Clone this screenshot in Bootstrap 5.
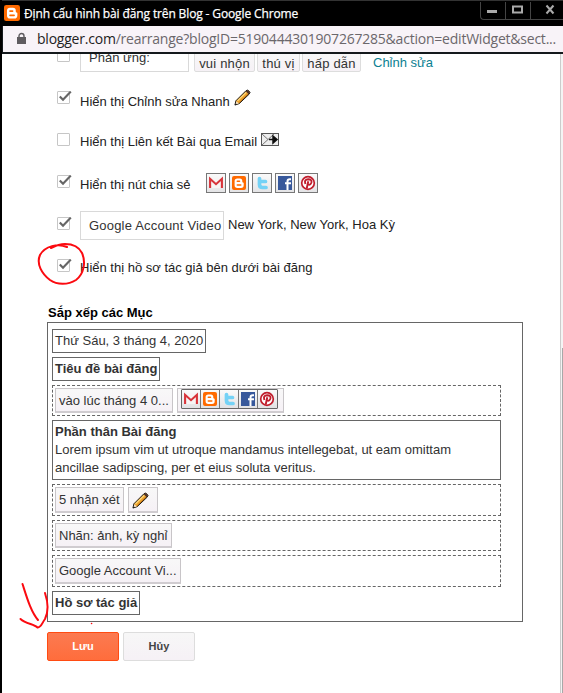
<!DOCTYPE html>
<html lang="vi">
<head>
<meta charset="utf-8">
<title>Định cấu hình bài đăng trên Blog</title>
<link rel="stylesheet" href="https://cdn.jsdelivr.net/npm/bootstrap@5.3.0/dist/css/bootstrap.min.css">
<style>
body{font:13px/18px "Liberation Sans",Arial,sans-serif;color:#222;width:563px;height:693px;overflow:hidden;background:#fff}
.win{width:563px;height:693px;border-left:2px solid #000}
.titlebar{height:26px;background:#000;color:#fff;border-top:1px solid #333;font:12px/26px "Open Sans","Noto Sans",sans-serif;padding-left:2px}
.titlebar .cap{margin-left:4px;white-space:nowrap;letter-spacing:-.13px;-webkit-text-stroke:.25px #fff}
.logo{margin-top:4px}
.controls{width:83px;height:18px;border:1px solid #444;border-right:0;border-top:0;border-radius:0 0 0 4px;margin-top:1px}
.controls span{width:25px;border-right:1px solid #444}
.controls span:last-child{flex:1;border:0}
.addr{height:28px;background:#f8f3f8;border-bottom:2px solid #14191c;border-left:1px solid #14191c;font:14px/26px "Open Sans","Noto Sans",sans-serif;color:#6b676b;padding-left:14px;white-space:nowrap}
.addr svg{flex:none;margin-top:6px}
.addr b{font-weight:400;color:#222}
.addr .url{margin-left:11px;letter-spacing:-.22px}
.page{height:639px;padding-left:45px;overflow:hidden}
.track{width:3px;height:639px;border-left:1px solid #ccc;background:#f4f4f4;padding:294px 0 0 1px}
.track div{height:345px;background:#a8a8a8}
.opt{height:42px;padding-left:10px}
.opt.first{height:37px}
.box{width:13px;height:13px;border:1px solid #c6c6c6;border-radius:1px;margin-right:10px;flex:none;background:#fff}
.box svg{display:block;overflow:visible;margin-top:-1px}
.lbl{line-height:20px;white-space:nowrap;margin-top:1px}
.up1{margin-top:0}.up2{margin-top:-1px}.up3{margin-top:-2px}
.field{border:1px solid #d9d9d9;padding-left:8px;white-space:nowrap;color:#333;flex:none}
.field.wide{width:144px;height:29px;margin-top:-6px;line-height:28px;letter-spacing:.2px}
.field.cut{width:109px;height:24px;margin-top:-6px;line-height:18px}
.chip{border:1px solid #ddd;background:linear-gradient(#f8f8f8,#f6f1f6);white-space:nowrap;color:#333}
.reac{height:22px;margin:-4px 0 0 2px;line-height:25px;border-radius:2px;text-align:center;flex:none;letter-spacing:.2px}
.more{color:#0b7f92;margin:-1px 0 0 12px}
.share{margin:-2px 0 0 15px;gap:3px}
.share>span{width:20px;height:20px;border:1px solid #777;background:linear-gradient(#fafafa,#e4e4e6);padding:1px}
.share svg,.strip svg{display:block;width:16px;height:16px}
.heading{color:#000;font-weight:700;line-height:22px;padding-left:1px;height:20px;margin-top:1px}
.board{width:476px;height:300px;border:1px solid #666;padding:6px 21px 0 4px;gap:4px;color:#333}
.solid{border:1px solid #666;padding:0 2px;height:24px;line-height:22px;white-space:nowrap}
.solid.tall{height:60px;line-height:18px;padding-top:2px}
.dash{border:1px dashed #666;padding:2px;gap:4px}
.dash .chip{border:1px solid #c8c5c8;border-bottom-width:2px;border-bottom-color:#d0ccd0;padding:0 3px;line-height:23px}
.strip{border:1px solid #666;height:20px;border-radius:1px;background:linear-gradient(#fafafa,#e2e2e4)}
.strip span{width:19px;padding:1px;border-right:1px solid #777}
.strip span:last-child{border:0}
.act{width:72px;height:29px;border-radius:2px;font:bold 11px/27px "Liberation Sans",Arial,sans-serif;padding:0}
.act.save,.act.save:hover{color:#fff;background:linear-gradient(#fb7a51,#ff6d3c);border:1px solid #ff4b12}
.act.cancel,.act.cancel:hover{color:#444;background:linear-gradient(#f7f7f7,#f6f1f6);border:1px solid #ddd}
.ink{position:absolute;left:0;top:0;pointer-events:none}
</style>
<script src="https://cdn.jsdelivr.net/npm/bootstrap@5.3.0/dist/js/bootstrap.bundle.min.js"></script>
</head>
<body>
<svg width="0" height="0" class="position-absolute">
<defs>
<symbol id="check" viewBox="0 0 15 14"><path d="M1.800 5.500 5 8.700 12.800.6" fill="none" stroke="#666" stroke-width="2.200"/></symbol>
<symbol id="gmail" viewBox="0 0 16 16"><path d="M1 3h14v10H1z" fill="#f7f4f4"/><path d="M2.100 13V3.800L8 9.200 13.900 3.800V13" fill="none" stroke="#d8343a" stroke-width="2.100"/></symbol>
<symbol id="blogger" viewBox="0 0 16 16"><rect x="1" y="1" width="14" height="14" rx="2" fill="#ff6a00"/><path d="M6.500 3.500h2.300A2.500 2.500 0 0 1 11.300 6v.7q0 .8.7.8.7 0 .7.8v1.900a2.700 2.700 0 0 1-2.700 2.700H6.300a2.700 2.700 0 0 1-2.700-2.700V6.300a2.800 2.800 0 0 1 2.900-2.800z" fill="#fff"/><path d="M6.300 6.300H8.500M6.300 10h3.500" stroke="#ff6a00" stroke-width="1.500" stroke-linecap="round"/></symbol>
<symbol id="twitter" viewBox="0 0 16 16"><path d="M5.500 3.500V9.500q0 3 3 3h3.500M6 6.500h5.500" fill="none" stroke="#74d2f6" stroke-width="3.700" stroke-linecap="round"/></symbol>
<symbol id="facebook" viewBox="0 0 16 16"><rect x="1" y="1" width="14" height="14" fill="#37589b"/><path d="M10.500 15V6.500q0-2.300 2.300-2.300H14M8 8.300h6" fill="none" stroke="#fff" stroke-width="2"/></symbol>
<symbol id="pin" viewBox="0 0 16 16"><circle cx="8" cy="8" r="6.300" fill="#fff" stroke="#c01d2c" stroke-width="1.700"/><path d="M5.400 9Q3.800 4.500 8.200 4.200q4 .1 3.200 3.300-1 3-3.300 1.900M8.300 6.200 6.700 13.500" fill="none" stroke="#c01d2c" stroke-width="1.900"/></symbol>
<symbol id="pencil" viewBox="0 0 18 18"><path d="M1 17 2 12.500 12.500 2 14.500 1 17 3.500 16 5.500 5.500 15.500z" fill="#eda32c" stroke="#111" stroke-width="1"/><path d="M3.700 12.500 13 3.500" stroke="#ffdc83" stroke-width="1.200"/><path d="M5.500 14.500 15 5.200" stroke="#b96a12"/><path d="M1.500 16.500 2.500 12.900 5.200 15.300z" fill="#f3dfc2"/><path d="M1 17l.6-2 1.500 1.400z" fill="#111"/><path d="M12.500 2.500 14.500 1.300 16.700 3.500 15.500 5.500z" fill="#4b302c"/></symbol>
</defs>
</svg>
<div class="win">
  <header class="titlebar d-flex align-items-start">
    <svg class="logo" width="16" height="16" viewBox="1 1 14 14"><use href="#blogger" width="16" height="16"/></svg>
    <span class="cap">Định cấu hình bài đăng trên Blog - Google Chrome</span>
    <div class="controls d-flex ms-auto">
      <span><svg class="d-block" width="24" height="17"><path d="M6 9.500h10" stroke="#aaa" stroke-width="3"/></svg></span>
      <span><svg class="d-block" width="24" height="17"><rect x="7" y="4.500" width="9" height="6" fill="none" stroke="#aaa" stroke-width="2"/></svg></span>
      <span><svg class="d-block" width="30" height="17"><path d="M15.500 3.500l7 8M22.500 3.500l-7 8" stroke="#aaa" stroke-width="2"/></svg></span>
    </div>
  </header>
  <div class="addr d-flex">
    <svg width="9" height="13" viewBox="0 0 9 13"><path d="M0 5h9v7H0z" fill="#5f5c60"/><path d="M2 6V4a2.500 2.500 0 0 1 5 0V6" fill="none" stroke="#5f5c60" stroke-width="1.400"/></svg>
    <span class="url"><b>blogger.com</b>/rearrange?blogID=5190444301907267285&amp;action=editWidget&amp;sect...</span>
  </div>
  <div class="d-flex">
    <main class="page flex-grow-1">
      <div class="opt first d-flex">
        <span class="box" style="margin-top:-5px"></span>
        <span class="field cut">Phản ứng:</span>
        <span class="chip reac" style="width:61px;margin-left:5px">vui nhộn</span>
        <span class="chip reac" style="width:43px">thú vị</span>
        <span class="chip reac" style="width:59px">hấp dẫn</span>
        <span class="lbl more">Chỉnh sửa</span>
      </div>
      <div class="opt d-flex"><span class="box"><svg width="15" height="14"><use href="#check"/></svg></span><span class="lbl">Hiển thị Chỉnh sửa Nhanh</span><svg width="17" height="17" style="margin:-2px 0 0 4px"><use href="#pencil"/></svg></div>
      <div class="opt d-flex"><span class="box"></span><span class="lbl up2">Hiển thị Liên kết Bài qua Email</span><svg width="19" height="13" style="margin:0 0 0 4px"><rect x=".5" y=".5" width="17" height="12" fill="#eee" stroke="#555"/><path d="M1 1l6 5.500L1 12M7 6.500 13 1" fill="none" stroke="#777"/><path d="M8 6.500h6M12 3l4 3.500L12 10z" stroke="#111" stroke-width="1.500"/></svg></div>
      <div class="opt d-flex"><span class="box"><svg width="15" height="14"><use href="#check"/></svg></span><span class="lbl up1">Hiển thị nút chia sẻ</span>
        <div class="share d-flex"><span><svg><use href="#gmail"/></svg></span><span><svg><use href="#blogger"/></svg></span><span><svg><use href="#twitter"/></svg></span><span><svg><use href="#facebook"/></svg></span><span><svg><use href="#pin"/></svg></span></div>
      </div>
      <div class="opt d-flex"><span class="box"><svg width="15" height="14"><use href="#check"/></svg></span><span class="field wide">Google Account Video</span><span class="lbl up3 ms-1">New York, New York, Hoa Kỳ</span></div>
      <div class="opt d-flex"><span class="box"><svg width="15" height="14"><use href="#check"/></svg></span><span class="lbl up2">Hiển thị hồ sơ tác giả bên dưới bài đăng</span></div>
      <div class="heading">Sắp xếp các Mục</div>
      <section class="board d-flex flex-column align-items-start">
        <div class="solid" style="width:154px">Thứ Sáu, 3 tháng 4, 2020</div>
        <div class="solid fw-bold" style="width:108px">Tiêu đề bài đăng</div>
        <div class="dash d-flex w-100" style="height:31px"><span class="chip" style="width:118px">vào lúc tháng 4 0...</span>
          <span class="chip" style="width:107px"><span class="strip d-flex" style="width:97px"><span><svg><use href="#gmail"/></svg></span><span><svg><use href="#blogger"/></svg></span><span><svg><use href="#twitter"/></svg></span><span><svg><use href="#facebook"/></svg></span><span><svg><use href="#pin"/></svg></span></span></span></div>
        <div class="solid tall w-100"><b>Phần thân Bài đăng</b><br>Lorem ipsum vim ut utroque mandamus intellegebat, ut eam omittam<br>ancillae sadipscing, per et eius soluta veritus.</div>
        <div class="dash d-flex w-100" style="height:32px"><span class="chip" style="width:69px">5 nhận xét</span><span class="chip" style="width:30px"><svg class="d-block" width="17" height="17" style="margin-top:4px"><use href="#pencil"/></svg></span></div>
        <div class="dash d-flex w-100" style="height:31px"><span class="chip" style="width:117px">Nhãn: ảnh, kỳ nghỉ</span></div>
        <div class="dash d-flex w-100" style="height:32px"><span class="chip" style="width:126px">Google Account Vi...</span></div>
        <div class="solid fw-bold" style="width:88px">Hồ sơ tác giả</div>
      </section>
      <div class="d-flex gap-1" style="margin-top:10px"><button class="btn act save">Lưu</button><button class="btn act cancel">Hủy</button></div>
    </main>
    <div class="track"><div></div></div>
  </div>
</div>
<svg class="ink" width="563" height="693" fill="none" stroke="#fb0a10" stroke-width="2" stroke-linecap="round" stroke-linejoin="round">
<path d="M67 247C58 243 45 246 40 255C36 264 42 274 50 280C57 285 68 285 76 280C84 274 86 262 82 253C79 247 73 244 65 244C59 244 55 246 51 248"/>
<path d="M22.500 584C27 598 31 612 38 620M20.500 619C26 624 34 624 37.500 627.500C41 628 42 623 45 619C49 611 48 602 45 593"/>
<path d="M91.500 623.500h.1" stroke-width="1.500"/>
</svg>
</body>
</html>
